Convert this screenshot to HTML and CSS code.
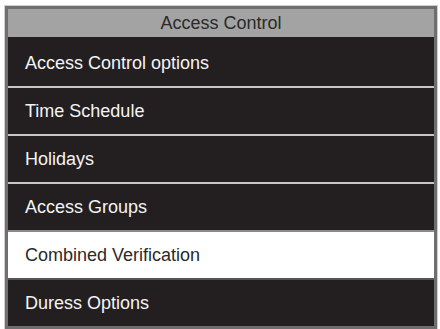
FILE: index.html
```html
<!DOCTYPE html>
<html>
<head>
<meta charset="utf-8">
<link rel="stylesheet" href="styles.css">
</head>
<body>
<div class="screen">
  <div class="header">Access Control</div>
  <ul class="menu">
    <li class="item first">Access Control options</li>
    <li class="item">Time Schedule</li>
    <li class="item">Holidays</li>
    <li class="item">Access Groups</li>
    <li class="item selected">Combined Verification</li>
    <li class="item">Duress Options</li>
  </ul>
</div>
</body>
</html>
```
FILE: styles.css
```css
html, body {
  margin: 0;
  padding: 0;
  background: #ffffff;
}
body {
  font-family: "Liberation Sans", Arial, Helvetica, sans-serif;
}
.screen {
  margin: 6px 0 0 5px;
  width: 426px;
  border: 3px solid #6e6e6e;
  box-shadow: 0 0 0 1px #d0d0d0;
  background: #231f20;
}
.header {
  height: 28px;
  line-height: 29px;
  background: #a3a3a3;
  color: #2a2a2a;
  text-align: center;
  font-size: 18px;
}
.menu {
  list-style: none;
  margin: 0;
  padding: 0;
}
.item {
  height: 46px;
  line-height: 46px;
  padding-left: 17px;
  color: #f4f4f4;
  font-size: 18px;
  border-top: 2px solid #c6c6c6;
  background: #231f20;
}
.item.first {
  height: 49px;
  line-height: 52px;
  border-top: none;
}
.item.selected {
  background: #ffffff;
  color: #2a2a2a;
  border-top-color: #8a8a8a;
}
.item.selected + .item {
  border-top-color: #555555;
}
```
